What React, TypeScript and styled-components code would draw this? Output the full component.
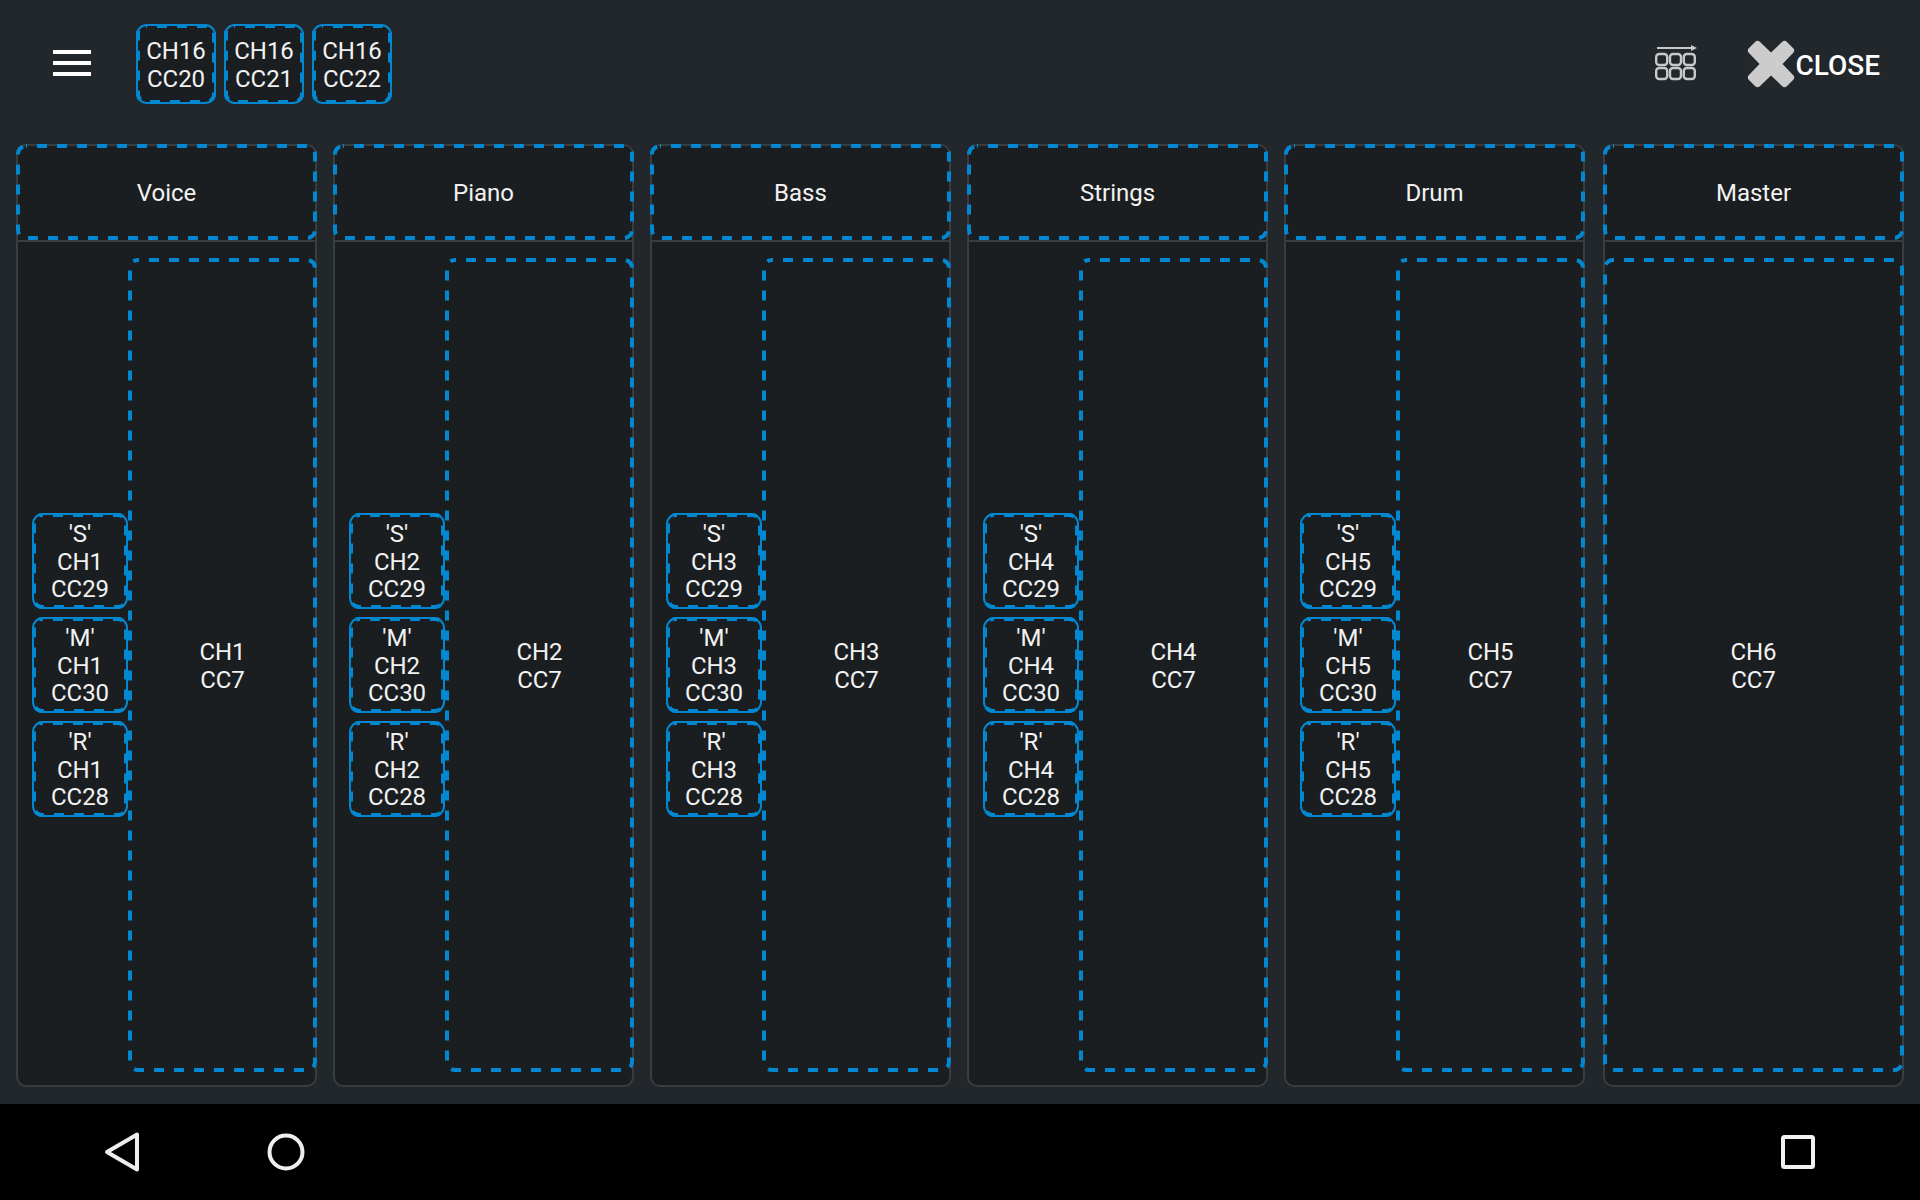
import React from 'react';
import styled, { createGlobalStyle } from 'styled-components';

const GlobalStyle = createGlobalStyle`
  html, body {
    margin: 0;
    padding: 0;
    height: 100%;
    background-color: #22272b;
    overflow: hidden;
  }
  #root {
    height: 100%;
  }
`;

const Screen = styled.div`
  width: 1920px;
  height: 1200px;
  display: flex;
  flex-direction: column;
  background-color: #22272b;
  color: #f2f2f2;
  font-family: Roboto, "Liberation Sans", sans-serif;
  font-size: 24px;
  overflow: hidden;
`;

const TopBar = styled.header`
  height: 144px;
  box-sizing: border-box;
  flex-shrink: 0;
  display: flex;
  align-items: flex-start;
  padding-top: 24px;
`;

const MenuButton = styled.div`
  width: 38px;
  margin: 26px 45px 0 53px;
  display: flex;
  flex-direction: column;
  gap: 7px;
`;

const MenuBar = styled.span`
  display: block;
  height: 4px;
  background-color: #fff;
`;

const CcGroup = styled.div`
  display: flex;
  gap: 8px;
`;

const FrameSvg = styled.svg`
  position: absolute;
  top: 0;
  left: 0;
  width: 100%;
  height: 100%;
  pointer-events: none;
`;

const FrameRect = styled.rect`
  x: 2px;
  y: 2px;
  width: calc(100% - 4px);
  height: calc(100% - 4px);
  fill: none;
  stroke: #0288d1;
  stroke-width: 4px;
  stroke-dasharray: 10 10;
  stroke-dashoffset: 9;
`;

const CcButton = styled.div<{ $width: number; $height: number }>`
  position: relative;
  box-sizing: border-box;
  width: ${(p) => p.$width}px;
  height: ${(p) => p.$height}px;
  border: 2px solid #0288d1;
  border-radius: 11px;
  background-color: #1b1e21;
  display: flex;
  align-items: center;
  justify-content: center;
  text-align: center;
  line-height: 28px;
  padding-top: 2px;

  ${FrameSvg} {
    top: -2px;
    left: -2px;
    width: calc(100% + 4px);
    height: calc(100% + 4px);
  }
`;

const ToolGroup = styled.div`
  margin-left: auto;
  display: flex;
  align-items: center;
  height: 80px;
  padding-right: 40px;
`;

const GridIcon = styled.svg`
  width: 42px;
  height: 36px;
  margin-right: 50px;
  margin-top: -2px;
`;

const CloseIcon = styled.svg`
  width: 48px;
  height: 48px;
`;

const CloseLabel = styled.span`
  font-size: 28px;
  font-weight: 500;
  color: #fff;
  padding-top: 2px;
`;

const Mixer = styled.main`
  flex: 1;
  display: flex;
  gap: 16px;
  padding: 0 16px 17px;
  min-height: 0;
`;

const Strip = styled.section<{ $master?: boolean }>`
  flex: 0 0 301px;
  margin-left: ${(p) => (p.$master ? 'auto' : 0)};
  display: flex;
  flex-direction: column;
  background-color: #1b1e21;
  border-radius: 10px;
  box-shadow: inset 0 0 0 2px #3a3d40;
`;

const StripHeader = styled.div`
  position: relative;
  box-sizing: border-box;
  height: 98px;
  flex-shrink: 0;
  border-bottom: 2px solid #3a3d40;
  display: flex;
  align-items: center;
  justify-content: center;
  padding-top: 2px;
`;

const StripBody = styled.div<{ $master?: boolean }>`
  flex: 1;
  min-height: 0;
  display: flex;
  align-items: center;
  padding: 16px 0 15px ${(p) => (p.$master ? 0 : 16)}px;
`;

const ButtonStack = styled.div`
  display: flex;
  flex-direction: column;
  gap: 8px;
`;

const StackButton = styled(CcButton)`
  line-height: 27.5px;
  padding-top: 3px;
`;

const Fader = styled.div`
  position: relative;
  flex: 1;
  align-self: stretch;
  display: flex;
  align-items: center;
  justify-content: center;
  text-align: center;
  line-height: 28px;
  padding-top: 2px;
`;

const NavBar = styled.nav`
  height: 96px;
  flex-shrink: 0;
  background-color: #000;
  display: flex;
  align-items: center;
  padding: 0 98px 0 102px;
`;

const NavIcon = styled.svg`
  display: block;
  width: 48px;
  height: 48px;
`;

const NavGroup = styled.div`
  display: flex;
  gap: 112px;
`;

const NavRight = styled.div`
  margin-left: auto;
`;

function DashFrame() {
  return (
    <FrameSvg>
      <FrameRect rx={8} ry={8} />
    </FrameSvg>
  );
}

function Lines({ lines }: { lines: string[] }) {
  return (
    <span>
      {lines.map((line) => (
        <React.Fragment key={line}>
          {line}
          <br />
        </React.Fragment>
      ))}
    </span>
  );
}

const strips = [
  { name: 'Voice', ch: 'CH1' },
  { name: 'Piano', ch: 'CH2' },
  { name: 'Bass', ch: 'CH3' },
  { name: 'Strings', ch: 'CH4' },
  { name: 'Drum', ch: 'CH5' },
  { name: 'Master', ch: 'CH6', master: true },
];

const stackButtons = [
  { label: "'S'", cc: 'CC29' },
  { label: "'M'", cc: 'CC30' },
  { label: "'R'", cc: 'CC28' },
];

export default function App() {
  return (
    <Screen>
      <GlobalStyle />
      <TopBar>
        <MenuButton>
          <MenuBar />
          <MenuBar />
          <MenuBar />
        </MenuButton>
        <CcGroup>
          {['CC20', 'CC21', 'CC22'].map((cc) => (
            <CcButton key={cc} $width={80} $height={80}>
              <Lines lines={['CH16', cc]} />
              <DashFrame />
            </CcButton>
          ))}
        </CcGroup>
        <ToolGroup>
          <GridIcon viewBox="0 0 42 36">
            <path d="M2 3h35" stroke="#c8c8c8" strokeWidth="2" />
            <path d="M36 0l6 3-6 3z" fill="#c8c8c8" />
            {[1.2, 15, 28.8].map((x) =>
              [9, 23].map((y) => (
                <rect key={`${x}-${y}`} x={x} y={y} width="11" height="11" rx="3" fill="none" stroke="#c8c8c8" strokeWidth="2.4" />
              ))
            )}
          </GridIcon>
          <CloseIcon viewBox="0 0 48 48">
            <path d="M24 12.5L12.5 1.5 Q10.5 0 8.5 1.5 L1.5 8.5 Q0 10.5 1.5 12.5 L12.5 24 L1.5 35.5 Q0 37.5 1.5 39.5 L8.5 46.5 Q10.5 48 12.5 46.5 L24 35.5 L35.5 46.5 Q37.5 48 39.5 46.5 L46.5 39.5 Q48 37.5 46.5 35.5 L35.5 24 L46.5 12.5 Q48 10.5 46.5 8.5 L39.5 1.5 Q37.5 0 35.5 1.5 Z" fill="#cccccc" />
          </CloseIcon>
          <CloseLabel>CLOSE</CloseLabel>
        </ToolGroup>
      </TopBar>
      <Mixer>
        {strips.map((strip) => (
          <Strip key={strip.name} $master={strip.master}>
            <StripHeader>
              {strip.name}
              <DashFrame />
            </StripHeader>
            <StripBody $master={strip.master}>
              {!strip.master && (
                <ButtonStack>
                  {stackButtons.map((b) => (
                    <StackButton key={b.cc} $width={96} $height={96}>
                      <Lines lines={[b.label, strip.ch, b.cc]} />
                      <DashFrame />
                    </StackButton>
                  ))}
                </ButtonStack>
              )}
              <Fader>
                <Lines lines={[strip.ch, 'CC7']} />
                <DashFrame />
              </Fader>
            </StripBody>
          </Strip>
        ))}
      </Mixer>
      <NavBar>
        <NavGroup>
          <NavIcon viewBox="0 0 48 48">
            <path d="M5 24L35 6.5V41.5Z" fill="none" stroke="#eeeeee" strokeWidth="4" strokeLinejoin="round" />
          </NavIcon>
          <NavIcon viewBox="0 0 48 48">
            <circle cx="24" cy="24" r="16.5" fill="none" stroke="#eeeeee" strokeWidth="4" />
          </NavIcon>
        </NavGroup>
        <NavRight>
          <NavIcon viewBox="0 0 48 48">
            <rect x="9" y="9" width="30" height="30" rx="1.5" fill="none" stroke="#f2f2f2" strokeWidth="4" />
          </NavIcon>
        </NavRight>
      </NavBar>
    </Screen>
  );
}
